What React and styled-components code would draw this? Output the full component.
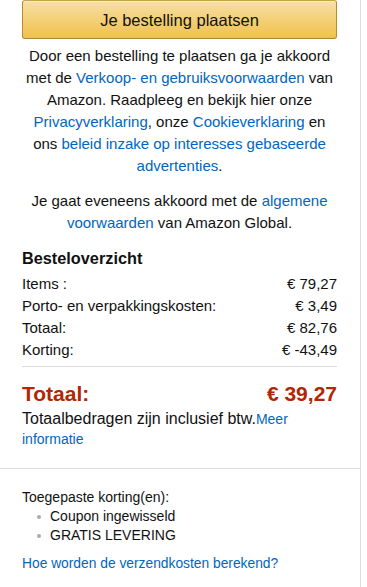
import React from "react";
import styled, { createGlobalStyle } from "styled-components";

const GlobalStyle = createGlobalStyle`
  body {
    margin: 0;
    background: #fff;
    font-family: "Liberation Sans", Arial, sans-serif;
    color: #111;
  }
`;

const summary = [
  { label: "Items :", value: "€ 79,27" },
  { label: "Porto- en verpakkingskosten:", value: "€ 3,49" },
  { label: "Totaal:", value: "€ 82,76" },
  { label: "Korting:", value: "€ -43,49" },
];

const App = () => {
  return (
    <>
      <GlobalStyle />
      <Panel>
        <Section>
          <PlaceButton>Je bestelling plaatsen</PlaceButton>
          <Legal>
            Door een bestelling te plaatsen ga je akkoord met de{" "}
            <Link>Verkoop- en gebruiksvoorwaarden</Link> van Amazon. Raadpleeg
            en bekijk hier onze <Link>Privacyverklaring</Link>, onze{" "}
            <Link>Cookieverklaring</Link> en ons{" "}
            <Link>beleid inzake op interesses gebaseerde advertenties</Link>.
          </Legal>
          <Legal $gap>
            Je gaat eveneens akkoord met de{" "}
            <Link>algemene voorwaarden</Link> van Amazon Global.
          </Legal>
          <Heading>Besteloverzicht</Heading>
          <Rows>
            {summary.map((row) => (
              <Row key={row.label}>
                <span>{row.label}</span>
                <span>{row.value}</span>
              </Row>
            ))}
          </Rows>
          <Total>
            <span>Totaal:</span>
            <span>€ 39,27</span>
          </Total>
          <Note>
            Totaalbedragen zijn inclusief btw.<SmallLink>Meer informatie</SmallLink>
          </Note>
        </Section>
        <Discounts>
          <div>Toegepaste korting(en):</div>
          <Bullets>
            <li>Coupon ingewisseld</li>
            <li>GRATIS LEVERING</li>
          </Bullets>
          <ShipLink>Hoe worden de verzendkosten berekend?</ShipLink>
        </Discounts>
      </Panel>
    </>
  );
};

export default App;

const Panel = styled.div`
  width: 360px;
  min-height: 587px;
  border-right: 1px solid #ddd;
`;

const Section = styled.div`
  padding: 0 23px 19px 22px;
  border-bottom: 1px solid #ddd;
`;

const PlaceButton = styled.button`
  display: block;
  width: 100%;
  height: 39px;
  margin: 0;
  padding: 1px 0 0;
  border: 1px solid #c89411;
  border-color: #c7a247 #b9892a #a88734;
  border-radius: 3px;
  background: linear-gradient(to bottom, #f7dfa5, #f0c14b);
  box-shadow: inset 0 1px 0 rgba(255, 255, 255, 0.4);
  font-family: "Liberation Sans", Arial, sans-serif;
  font-size: 16.5px;
  color: #111;
  cursor: pointer;
`;

const Legal = styled.p`
  margin: ${(p) => (p.$gap ? "13px 0 0" : "6px 0 0")};
  text-align: center;
  font-size: 15px;
  line-height: 22px;
  padding: 0 4px;
`;

const Link = styled.a`
  color: #0066c0;
  cursor: pointer;
`;

const Heading = styled.h3`
  margin: 13px 0 4px;
  font-size: 16.3px;
  font-weight: bold;
  line-height: 22px;
`;

const Rows = styled.div`
  padding-bottom: 5px;
  border-bottom: 1px solid #ddd;
`;

const Row = styled.div`
  display: flex;
  justify-content: space-between;
  font-size: 15px;
  line-height: 22px;
`;

const Total = styled.div`
  display: flex;
  justify-content: space-between;
  margin-top: 12px;
  font-size: 21px;
  line-height: 30px;
  font-weight: bold;
  color: #b12704;
`;

const Note = styled.div`
  font-size: 16px;
  line-height: 20px;
`;

const SmallLink = styled.a`
  color: #0066c0;
  font-size: 14px;
  cursor: pointer;
`;

const Discounts = styled.div`
  padding: 19px 22px 0;
  font-size: 14px;
  line-height: 19px;
`;

const Bullets = styled.ul`
  margin: 0;
  padding: 0 0 0 28px;
  list-style: none;

  li {
    position: relative;
  }

  li::before {
    content: "";
    position: absolute;
    left: -13px;
    top: 8px;
    width: 4px;
    height: 4px;
    border-radius: 50%;
    background: #aaa;
  }
`;

const ShipLink = styled.a`
  display: block;
  margin-top: 9px;
  font-size: 13.8px;
  color: #0066c0;
  cursor: pointer;
`;
